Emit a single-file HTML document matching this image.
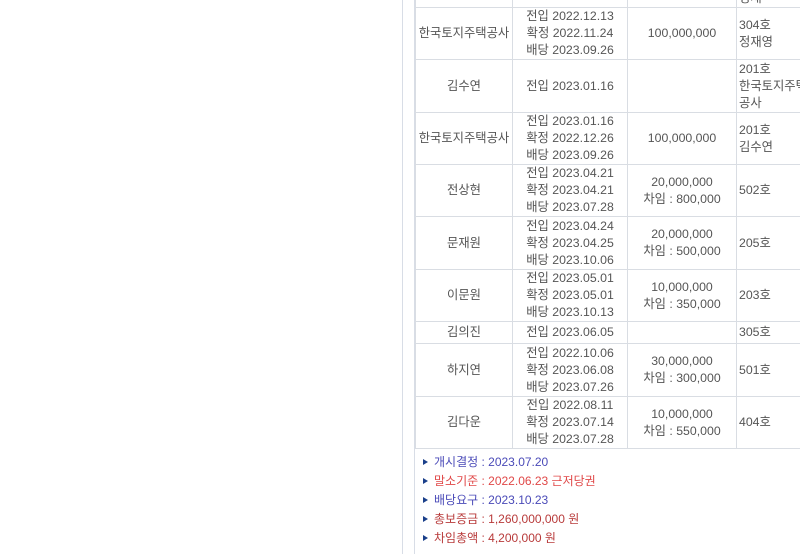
<!DOCTYPE html><html><head><meta charset="utf-8"><style>
body{margin:0;width:800px;height:554px;overflow:hidden;background:#fff;font-family:"Liberation Sans","Noto Sans CJK KR",sans-serif;font-size:12px;color:#555;position:relative}
.vl{position:absolute;top:0;bottom:0;width:1px;background:#d8dde6}
table{position:absolute;left:415px;top:-45px;border-collapse:collapse;width:400px}
td{border:1px solid #d9dde3;text-align:center;line-height:17px;padding:0;height:51px;vertical-align:middle;font-size:12.3px}
tr.t td{height:52px}
td.l{text-align:left;padding-left:2px}
td.s{height:21px}
.info{position:absolute;left:420px;top:453px;line-height:19px;font-size:12px}
.info div{position:relative;padding-left:14px}
.info div:before{content:"";position:absolute;left:3px;top:6px;border-left:5px solid #1a3f8a;border-top:3.5px solid transparent;border-bottom:3.5px solid transparent}
.b{color:#4a4ab8}.r{color:#e04848}.d{color:#b83a3a}
</style></head><body>
<div class="vl" style="left:402px"></div><div class="vl" style="left:414px"></div>
<table>
<colgroup><col style="width:97px"><col style="width:115px"><col style="width:109px"><col></colgroup>
<tr><td></td><td></td><td></td><td class="l"><br><br>정재</td></tr>
<tr><td>한국토지주택공사</td><td>전입 2022.12.13<br>확정 2022.11.24<br>배당 2023.09.26</td><td>100,000,000</td><td class="l">304호<br>정재영</td></tr>
<tr class="t"><td>김수연</td><td>전입 2023.01.16</td><td></td><td class="l">201호<br>한국토지주택<br>공사</td></tr>
<tr><td>한국토지주택공사</td><td>전입 2023.01.16<br>확정 2022.12.26<br>배당 2023.09.26</td><td>100,000,000</td><td class="l">201호<br>김수연</td></tr>
<tr><td>전상현</td><td>전입 2023.04.21<br>확정 2023.04.21<br>배당 2023.07.28</td><td>20,000,000<br>차임 : 800,000</td><td class="l">502호</td></tr>
<tr class="t"><td>문재원</td><td>전입 2023.04.24<br>확정 2023.04.25<br>배당 2023.10.06</td><td>20,000,000<br>차임 : 500,000</td><td class="l">205호</td></tr>
<tr><td>이문원</td><td>전입 2023.05.01<br>확정 2023.05.01<br>배당 2023.10.13</td><td>10,000,000<br>차임 : 350,000</td><td class="l">203호</td></tr>
<tr><td class="s">김의진</td><td class="s">전입 2023.06.05</td><td class="s"></td><td class="l s">305호</td></tr>
<tr class="t"><td>하지연</td><td>전입 2022.10.06<br>확정 2023.06.08<br>배당 2023.07.26</td><td>30,000,000<br>차임 : 300,000</td><td class="l">501호</td></tr>
<tr><td>김다운</td><td>전입 2022.08.11<br>확정 2023.07.14<br>배당 2023.07.28</td><td>10,000,000<br>차임 : 550,000</td><td class="l">404호</td></tr>
</table>
<div class="info">
<div class="b">개시결정 : 2023.07.20</div>
<div class="r">말소기준 : 2022.06.23 근저당권</div>
<div class="b">배당요구 : 2023.10.23</div>
<div class="d">총보증금 : 1,260,000,000 원</div>
<div class="d">차임총액 : 4,200,000 원</div>
</div>
</body></html>
